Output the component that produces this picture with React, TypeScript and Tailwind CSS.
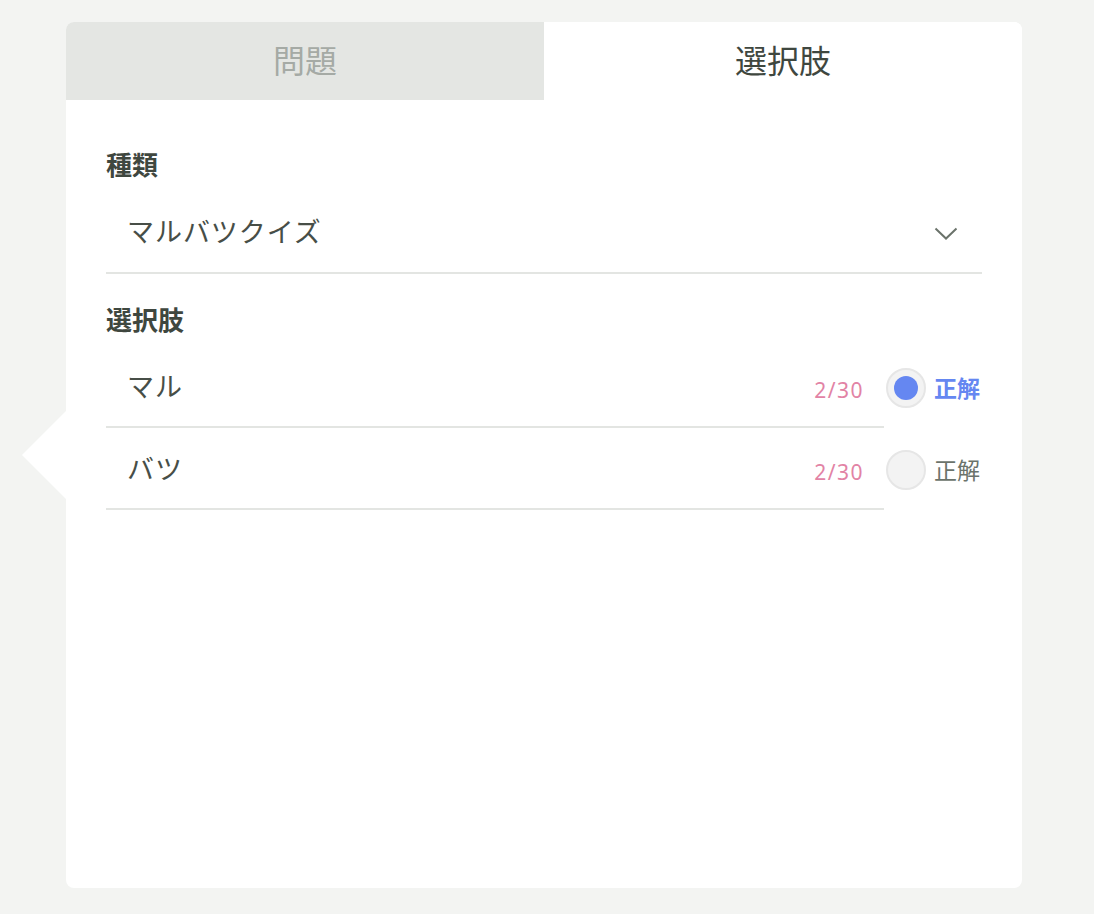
import { useState } from "react";

const font = { fontFamily: '"Noto Sans", "Noto Sans CJK JP", sans-serif' };

type Choice = { id: string; label: string };

const choices: Choice[] = [
  { id: "maru", label: "マル" },
  { id: "batsu", label: "バツ" },
];

export default function App() {
  const [tab, setTab] = useState<"question" | "choices">("choices");
  const [correct, setCorrect] = useState("maru");

  return (
    <div className="relative h-[914px] w-full overflow-hidden bg-[#f3f4f2]" style={font}>
      {/* pointer into the card */}
      <div className="absolute left-[22px] top-[411px] h-0 w-0 border-y-[44px] border-r-[44px] border-y-transparent border-r-white" />

      <div className="ml-[66px] mt-[22px] flex h-[866px] w-[956px] flex-col overflow-hidden rounded-lg bg-white">
        <div className="grid h-[78px] grid-cols-2">
          <Tab label="問題" active={tab === "question"} onClick={() => setTab("question")} />
          <Tab label="選択肢" active={tab === "choices"} onClick={() => setTab("choices")} />
        </div>

        <div className="px-10 pt-[49px]">
          <Label>種類</Label>
          <div className="flex items-center justify-between border-b-2 border-[#e3e5e2] pb-5 pl-[21px] pr-6 pt-[31px]">
            <span className="text-[27px] leading-10 tracking-[0.035em] text-[#474e47]">マルバツクイズ</span>
            <svg width="24" height="14" viewBox="0 0 24 14" fill="none" className="mt-1">
              <path d="M1.5 1.5 12 11.5 22.5 1.5" stroke="#6b736b" strokeWidth="2" />
            </svg>
          </div>

          <div className="mt-[30px]">
            <Label>選択肢</Label>
          </div>
          <div className="mt-2.5">
            {choices.map((choice) => {
              const on = correct === choice.id;
              return (
                <div key={choice.id} className="flex items-start">
                  <div className="flex h-[82px] w-[778px] items-start justify-between border-b-2 border-[#e3e5e2] pl-[21px] pr-5 pt-[21px]">
                    <span className="text-[27px] leading-10 tracking-[0.04em] text-[#474e47]">{choice.label}</span>
                    <span className="pt-[7px] text-[21px] leading-8 tracking-[0.07em] text-[#e283a5]">2/30</span>
                  </div>
                  <button type="button" onClick={() => setCorrect(choice.id)} className="flex items-center gap-2 pl-[2px] pt-[22px]">
                    <span className="grid h-10 w-10 place-items-center rounded-full border-2 border-[#e6e6e6] bg-[#f3f3f3]">
                      {on && <span className="h-6 w-6 rounded-full bg-[#6587f1]" />}
                    </span>
                    <span className={on ? "text-[23px] font-bold text-[#6587f1]" : "text-[23px] text-[#6b736b]"}>正解</span>
                  </button>
                </div>
              );
            })}
          </div>
        </div>
      </div>
    </div>
  );
}

function Tab({ label, active, onClick }: { label: string; active: boolean; onClick: () => void }) {
  return (
    <button
      type="button"
      onClick={onClick}
      className={active ? "bg-white text-[32px] text-[#3f473f]" : "bg-[#e4e6e3] text-[32px] text-[#a5aaa5]"}
    >
      {label}
    </button>
  );
}

function Label({ children }: { children: React.ReactNode }) {
  return <div className="text-[26px] font-bold leading-8 text-[#3f473f]">{children}</div>;
}
